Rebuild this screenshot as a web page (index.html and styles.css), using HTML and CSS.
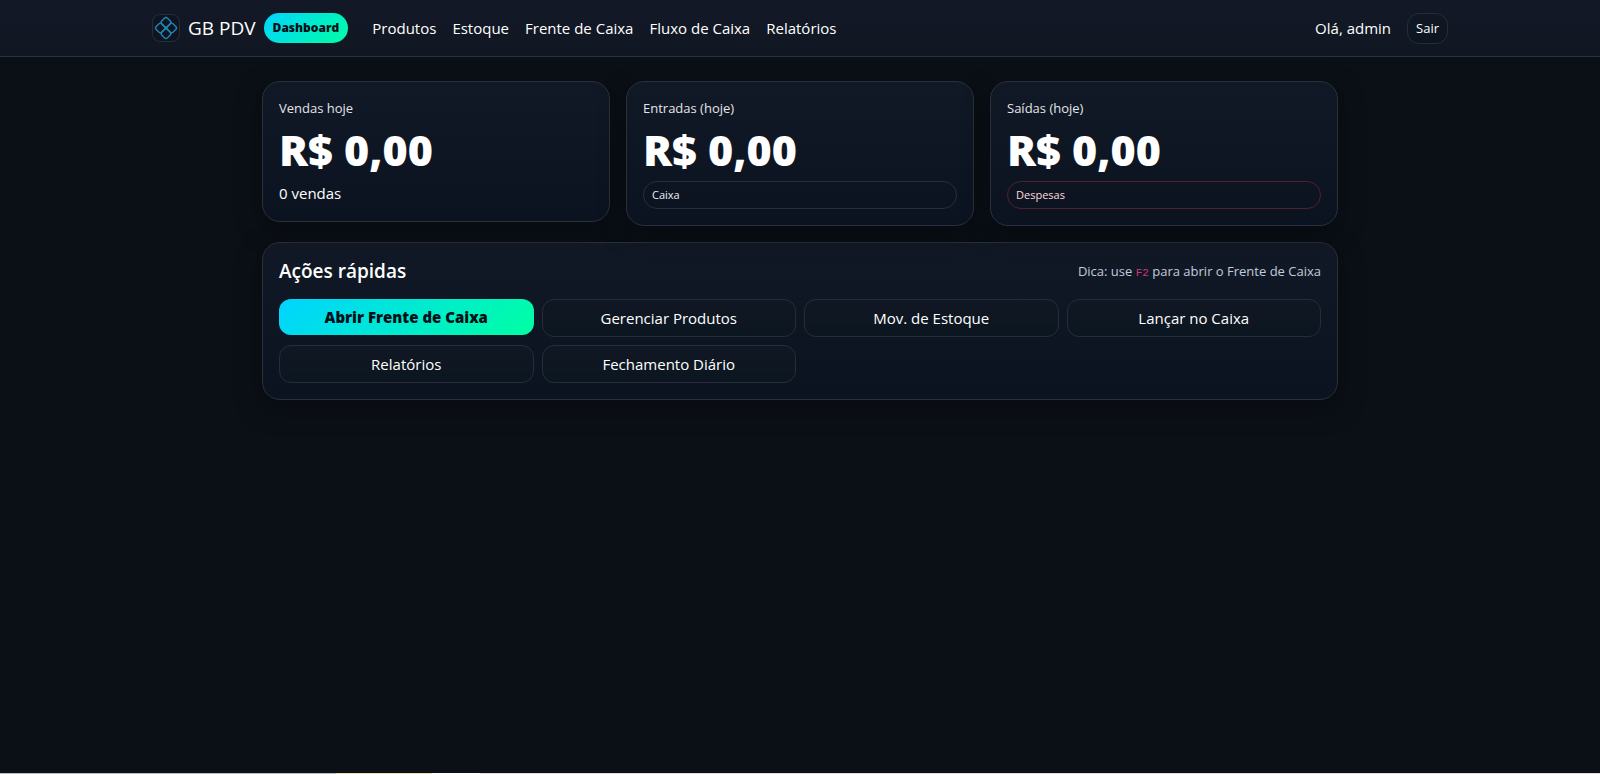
FILE: index.html
```html
<!DOCTYPE html>
<html lang="pt-BR">
<head>
<meta charset="utf-8">
<title>GB PDV</title>
<link rel="stylesheet" href="styles.css">
</head>
<body>
<header class="navbar">
  <div class="navbar-inner">
    <a class="brand" href="#">
      <span class="logo">
        <svg viewBox="0 0 28 28" width="28" height="28" fill="none" stroke="#1f86b4" stroke-width="1.4" aria-hidden="true">
          <g transform="rotate(45 14 14)">
            <rect x="6" y="6" width="8" height="8" rx="2.200"/>
            <rect x="14" y="6" width="8" height="8" rx="2.200"/>
            <rect x="6" y="14" width="8" height="8" rx="2.200"/>
            <rect x="14" y="14" width="8" height="8" rx="2.200"/>
          </g>
          <circle cx="14" cy="14" r="1" fill="#1f86b4" stroke="none"/>
        </svg>
      </span>
      <span class="brand-name">GB PDV</span>
      <span class="brand-badge">Dashboard</span>
    </a>
    <nav class="links">
      <a href="#">Produtos</a>
      <a href="#">Estoque</a>
      <a href="#">Frente de Caixa</a>
      <a href="#">Fluxo de Caixa</a>
      <a href="#">Relatórios</a>
    </nav>
    <div class="user">
      <span>Olá, admin</span>
      <button class="btn btn-small" type="button">Sair</button>
    </div>
  </div>
</header>
<main class="content">
  <section class="stats">
    <article class="card">
      <div class="label">Vendas hoje</div>
      <div class="value">R$ 0,00</div>
      <div class="count">0 vendas</div>
    </article>
    <article class="card">
      <div class="label">Entradas (hoje)</div>
      <div class="value">R$ 0,00</div>
      <div class="pill">Caixa</div>
    </article>
    <article class="card">
      <div class="label">Saídas (hoje)</div>
      <div class="value">R$ 0,00</div>
      <div class="pill pill-danger">Despesas</div>
    </article>
  </section>
  <section class="card">
    <div class="panel-head">
      <h1>Ações rápidas</h1>
      <p class="hint">Dica: use <code>F2</code> para abrir o Frente de Caixa</p>
    </div>
    <div class="actions">
      <a class="btn btn-primary" href="#">Abrir Frente de Caixa</a>
      <a class="btn" href="#">Gerenciar Produtos</a>
      <a class="btn" href="#">Mov. de Estoque</a>
      <a class="btn" href="#">Lançar no Caixa</a>
      <a class="btn" href="#">Relatórios</a>
      <a class="btn" href="#">Fechamento Diário</a>
    </div>
  </section>
</main>
<footer class="edge"></footer>
</body>
</html>
```
FILE: styles.css
```css
* { box-sizing: border-box; }
body {
  margin: 0;
  min-height: 100vh;
  display: flex;
  flex-direction: column;
  background: #0b1017;
  color: #fff;
  font: 15px/24px "Open Sans", "Noto Sans", sans-serif;
}
a { color: inherit; text-decoration: none; }
.navbar {
  background: linear-gradient(180deg, #121826, #111722);
  border-bottom: 1px solid #2b303a;
}
.navbar-inner {
  max-width: 1296px;
  min-height: 56px;
  margin: 0 auto;
  display: flex;
  align-items: center;
}
.brand { display: flex; align-items: center; gap: 8px; margin-right: 24px; }
.logo {
  display: flex;
  width: 28px;
  height: 28px;
  border-radius: 8px;
  background: #0e1420;
  box-shadow: inset 0 0 0 1px #262c38;
}
.brand-name { font-size: 19px; }
.brand-badge {
  padding: 3px 9px;
  border-radius: 16px;
  background: linear-gradient(135deg, #00d4ff, #00ffa3);
  color: #001018;
  font-size: 12px;
  font-weight: 800;
}
.links { display: flex; gap: 16px; }
.user { display: flex; align-items: center; gap: 16px; margin-left: auto; }
.content {
  flex: 1;
  width: 100%;
  max-width: 1076px;
  margin: 0 auto;
  padding: 24px 0;
}
.stats {
  display: grid;
  grid-template-columns: repeat(3, 1fr);
  align-items: start;
  gap: 16px;
  margin-bottom: 16px;
}
.card {
  padding: 16px;
  border: 1px solid #2a303b;
  border-radius: 18px;
  background: linear-gradient(180deg, #121926, #0c1320);
  box-shadow: 0 8px 24px rgba(6, 8, 10, 0.5);
}
.label { font-size: 13px; line-height: 21px; color: #e3e5e8; }
.value {
  margin: 4px 0;
  font-size: 43px;
  line-height: 54px;
  font-weight: 800;
}
.pill {
  padding: 3px 8px;
  border: 1px solid #282e3a;
  border-radius: 14px;
  color: #e9eef5;
  font-size: 11px;
  line-height: 20px;
}
.pill-danger { border-color: #50212f; color: #ffd9df; }
.panel-head {
  display: flex;
  justify-content: space-between;
  align-items: center;
  margin-bottom: 16px;
}
.panel-head h1 { margin: 0; font-size: 19px; line-height: 24px; font-weight: 600; }
.hint { margin: 0; color: #c3cbdc; font-size: 13px; }
.hint code { color: #d63384; font: 11px "Liberation Mono", monospace; }
.actions {
  display: grid;
  grid-template-columns: repeat(4, 1fr);
  align-items: start;
  gap: 8px;
}
.btn {
  padding: 6px 12px;
  border: 1px solid #262d38;
  border-radius: 12px;
  background: linear-gradient(180deg, #111724, #0b1620);
  color: #fff;
  font: inherit;
  text-align: center;
}
.btn-small { padding: 4px 8px; font-size: 13px; line-height: 21px; }
.btn-primary {
  border: 0;
  background: linear-gradient(135deg, #00d4ff, #00ffa3);
  color: #001018;
  font-weight: 800;
}
.edge {
  height: 1px;
  background: linear-gradient(90deg, #b9bec6 0 21%, #e9e2b8 21% 27%, #fff 27% 30%, #e6dcd6 30%);
}
```
